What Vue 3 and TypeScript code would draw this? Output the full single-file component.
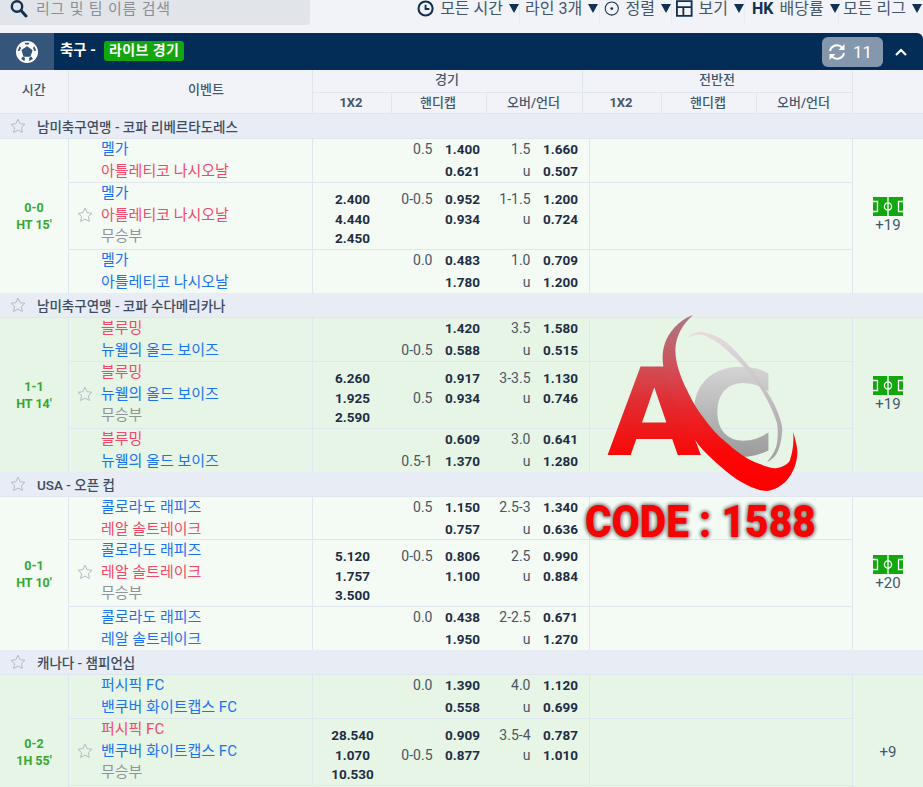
<script setup lang="ts">
interface Line { t: string; c: 'h' | 'a' | 'd' }
interface Row {
  names: Line[]
  x12?: string[]
  hv: [string, string]
  ho: [string, string]
  ov: [string, string]
  oo: [string, string]
}
interface Match { score: string; time: string; more: string; icon: boolean; alt: boolean; tight?: boolean; tail?: boolean; league: string; rows: Row[] }

const L = (t: string, c: 'h' | 'a' | 'd'): Line => ({ t, c })
const D = L('무승부', 'd')

function group(home: string, away: string, spec: any[][]): Row[] {
  return spec.map((s) => ({
    names: s[0] === 'x' ? [L(home, s[1]), L(away, s[2]), D] : [L(home, s[1]), L(away, s[2])],
    x12: s[0] === 'x' ? s[3] : undefined,
    hv: s[4], ho: s[5], ov: s[6], oo: s[7],
  }))
}

const matches: Match[] = [
  {
    score: '0-0', time: "HT 15'", more: '+19', icon: true, alt: false,
    league: '남미축구연맹 - 코파 리베르타도레스',
    rows: group('멜가', '아틀레티코 나시오날', [
      ['n', 'h', 'a', null, ['0.5', ''], ['1.400', '0.621'], ['1.5', 'u'], ['1.660', '0.507']],
      ['x', 'h', 'a', ['2.400', '4.440', '2.450'], ['0-0.5', ''], ['0.952', '0.934'], ['1-1.5', 'u'], ['1.200', '0.724']],
      ['n', 'h', 'h', null, ['0.0', ''], ['0.483', '1.780'], ['1.0', 'u'], ['0.709', '1.200']],
    ]),
  },
  {
    score: '1-1', time: "HT 14'", more: '+19', icon: true, alt: true,
    league: '남미축구연맹 - 코파 수다메리카나',
    rows: group('블루밍', '뉴웰의 올드 보이즈', [
      ['n', 'a', 'h', null, ['', '0-0.5'], ['1.420', '0.588'], ['3.5', 'u'], ['1.580', '0.515']],
      ['x', 'a', 'h', ['6.260', '1.925', '2.590'], ['', '0.5'], ['0.917', '0.934'], ['3-3.5', 'u'], ['1.130', '0.746']],
      ['n', 'a', 'h', null, ['', '0.5-1'], ['0.609', '1.370'], ['3.0', 'u'], ['0.641', '1.280']],
    ]),
  },
  {
    score: '0-1', time: "HT 10'", more: '+20', icon: true, alt: false, tight: true,
    league: 'USA - 오픈 컵',
    rows: group('콜로라도 래피즈', '레알 솔트레이크', [
      ['n', 'h', 'a', null, ['0.5', ''], ['1.150', '0.757'], ['2.5-3', 'u'], ['1.340', '0.636']],
      ['x', 'h', 'a', ['5.120', '1.757', '3.500'], ['0-0.5', ''], ['0.806', '1.100'], ['2.5', 'u'], ['0.990', '0.884']],
      ['n', 'h', 'h', null, ['0.0', ''], ['0.438', '1.950'], ['2-2.5', 'u'], ['0.671', '1.270']],
    ]),
  },
  {
    score: '0-2', time: "1H 55'", more: '+9', icon: false, alt: true, tail: true,
    league: '캐나다 - 챔피언십',
    rows: group('퍼시픽 FC', '밴쿠버 화이트캡스 FC', [
      ['n', 'h', 'h', null, ['0.0', ''], ['1.390', '0.558'], ['4.0', 'u'], ['1.120', '0.699']],
      ['x', 'a', 'h', ['28.540', '1.070', '10.530'], ['', '0-0.5'], ['0.909', '0.877'], ['3.5-4', 'u'], ['0.787', '1.010']],
    ]),
  },
]
</script>

<template>
  <div class="page">
    <div class="toolbar">
      <div class="search">
        <svg class="search-ico" width="18" height="18" viewBox="0 0 18 18"><circle cx="7" cy="6.500" r="5.200" fill="none" stroke="#12304f" stroke-width="2.400"/><path d="M11 10.500l5 5.400" stroke="#12304f" stroke-width="3" stroke-linecap="round"/></svg>
        <span>리그 및 팀 이름 검색</span>
      </div>
      <div class="tools">
        <div class="tool w1">
          <svg width="18" height="18" viewBox="0 0 18 18"><circle cx="9" cy="8.500" r="7.400" fill="none" stroke="#12304f" stroke-width="2.200"/><path d="M9 4.500v4.500h4" fill="none" stroke="#12304f" stroke-width="2"/></svg>
          <span>모든 시간</span><i class="tri"></i>
        </div>
        <div class="tool w2"><span>라인 3개</span><i class="tri"></i></div>
        <div class="tool w3">
          <svg width="18" height="18" viewBox="0 0 18 18"><circle cx="9" cy="8.500" r="7.600" fill="none" stroke="#12304f" stroke-width="1.200"/><circle cx="9" cy="8.500" r="1.600" fill="#12304f"/></svg>
          <span>정렬</span><i class="tri"></i>
        </div>
        <div class="tool w4">
          <svg width="18" height="18" viewBox="0 0 18 18"><path d="M1 0.500h16v16H1zM1 7h16M8 7v9.500" fill="none" stroke="#12304f" stroke-width="2"/></svg>
          <span>보기</span><i class="tri"></i>
        </div>
        <div class="tool w5"><b>HK</b><span>배당률</span><i class="tri"></i></div>
        <div class="tool w6"><span>모든 리그</span><i class="tri"></i></div>
      </div>
    </div>

    <div class="panel-head">
      <div class="ball-box">
        <svg width="24" height="24" viewBox="0 0 24 24">
          <circle cx="12" cy="12" r="11" fill="#fff"/>
          <path d="M12 7l4.700 3.400-1.800 5.600H9.100l-1.800-5.600z" fill="#35557a" stroke="#35557a" stroke-width="1.500" stroke-linejoin="round"/>
          <path d="M9.500 2.800l5 0-1 1.800h-3zM19.300 6.200l2 4.500-1.800.2-1.600-3zM4.700 6.200l-2 4.500 1.800.2 1.600-3zM6 19l1.800-2.400 2.200 1.400-.4 3zM18 19l-1.800-2.400L14 18l.4 3z" fill="#35557a"/>
        </svg>
      </div>
      <span class="sport">축구 -</span>
      <span class="live">라이브 경기</span>
      <div class="refresh">
        <svg width="18" height="18" viewBox="0 0 18 18" fill="none" stroke="#fff" stroke-width="2">
          <path d="M2 8A7 7 0 0 1 14.300 4.800M16 10A7 7 0 0 1 3.700 13.200"/>
          <path d="M16.500 1v6h-6M1.500 17v-6h6" fill="#fff" stroke="none"/>
        </svg>
        <span>11</span>
      </div>
      <svg class="chev" width="14" height="10" viewBox="0 0 14 10"><path d="M2 8l5-5 5 5" fill="none" stroke="#fff" stroke-width="2.200"/></svg>
    </div>

    <div class="thead">
      <div class="th-time">시간</div>
      <div class="th-event">이벤트</div>
      <div class="th-span">
        <div class="th-top">경기</div>
        <div class="th-sub"><div class="c-x">1X2</div><div class="c-h">핸디캡</div><div class="c-o">오버/언더</div></div>
      </div>
      <div class="th-span">
        <div class="th-top">전반전</div>
        <div class="th-sub"><div class="c-x">1X2</div><div class="c-h">핸디캡</div><div class="c-o">오버/언더</div></div>
      </div>
      <div class="th-last"></div>
    </div>

    <template v-for="m in matches" :key="m.league">
      <div class="league">
        <svg class="star" width="16" height="16" viewBox="0 0 16 16"><path d="M8 1.200l2.100 4.500 4.900.6-3.600 3.300 1 4.900L8 12.100l-4.400 2.400 1-4.900L1 6.300l4.900-.6z" fill="none" stroke="#b4bbc6" stroke-width="1"/></svg>
        <span>{{ m.league }}</span>
      </div>
      <div class="match" :class="{ alt: m.alt, tight: m.tight }">
        <div class="time"><div>{{ m.score }}</div><div>{{ m.time }}</div></div>
        <div class="rows">
          <div v-for="(r, i) in m.rows" :key="i" class="row" :class="[r.x12 ? 'tall' : i === 0 ? 'first' : 'last']">
            <div class="event">
              <svg v-if="r.x12" class="star row-star" width="16" height="16" viewBox="0 0 16 16"><path d="M8 1.200l2.100 4.500 4.900.6-3.600 3.300 1 4.900L8 12.100l-4.400 2.400 1-4.900L1 6.300l4.900-.6z" fill="none" stroke="#b4bbc6" stroke-width="1"/></svg>
              <div class="names">
                <div v-for="n in r.names" :key="n.t" :class="n.c">{{ n.t }}</div>
              </div>
            </div>
            <div class="odds c-x"><div v-for="x in r.x12 || []" :key="x">{{ x }}</div></div>
            <div class="odds c-h pair">
              <div><span class="val">{{ r.hv[0] }}</span><span class="od">{{ r.ho[0] }}</span></div>
              <div><span class="val">{{ r.hv[1] }}</span><span class="od">{{ r.ho[1] }}</span></div>
            </div>
            <div class="odds c-o pair">
              <div><span class="val">{{ r.ov[0] }}</span><span class="od">{{ r.oo[0] }}</span></div>
              <div><span class="val">{{ r.ov[1] }}</span><span class="od">{{ r.oo[1] }}</span></div>
            </div>
            <div class="half"></div>
          </div>
          <div v-if="m.tail" class="tail"></div>
        </div>
        <div class="more">
          <svg v-if="m.icon" width="30" height="19" viewBox="0 0 30 19">
            <rect width="30" height="19" fill="#12a70f"/>
            <g fill="none" stroke="#fff" stroke-width="1.300"><path d="M15 0v19"/><circle cx="15" cy="9.500" r="3.600"/><path d="M0 4.500h4.500v10H0M30 4.500h-4.500v10H30"/></g>
          </svg>
          <span>{{ m.more }}</span>
        </div>
      </div>
    </template>

    <div class="mark">
      <svg class="logo" width="200" height="190" viewBox="0 0 200 190">
        <defs>
          <linearGradient id="ga" gradientUnits="userSpaceOnUse" x1="0" y1="50" x2="0" y2="142"><stop offset="0" stop-color="#cf5058"/><stop offset="0.45" stop-color="#e22a2e"/><stop offset="1" stop-color="#fb0606"/></linearGradient>
          <linearGradient id="gs" gradientUnits="userSpaceOnUse" x1="0" y1="0" x2="0" y2="176"><stop offset="0" stop-color="#ab7a85"/><stop offset="0.3" stop-color="#cf5058"/><stop offset="0.55" stop-color="#e8262a"/><stop offset="0.8" stop-color="#fb0606"/><stop offset="1" stop-color="#ff0000"/></linearGradient>
          <linearGradient id="gc" gradientUnits="userSpaceOnUse" x1="0" y1="50" x2="0" y2="145"><stop offset="0" stop-color="#d6d6d6"/><stop offset="1" stop-color="#9a9a9a"/></linearGradient>
          <linearGradient id="gt" gradientUnits="userSpaceOnUse" x1="0" y1="18" x2="0" y2="148"><stop offset="0" stop-color="#e6dcdf"/><stop offset="1" stop-color="#a0a0a0"/></linearGradient>
        </defs>
        <text x="88" y="141" font-family="'DejaVu Sans', sans-serif" font-weight="700" font-size="120" fill="url(#gc)">C</text>
        <path d="M87 24C92 19 98 17 103 18C114 20 122 25 127 29C140 40 148 52 157 63C165 74 173 86 178 99C181 107 183 113 182 119C181 130 178 140 173 144C171 146 169 147 167 148C172 142 176 136 177 129C178 122 178 115 177 109C172 94 165 81 157 69C148 57 140 48 130 39C122 31 112 24 103 21C97 20 92 21 87 24Z" fill="url(#gt)"/>
        <text x="7" y="141" font-family="'DejaVu Sans', sans-serif" font-weight="700" font-size="122" fill="url(#ga)">A</text>
        <path d="M93 1C83 10 77 20 75.500 33C74.500 46 80 62 87 76C92 87 97 95 103 103C110 113 118 122 127 129C136 137 146 145 157 149C165 152 172 155 177 154C184 153 189 149 190 146C193 137 194 128 193 118C197 130 198 137 197 143C196 152 192 160 187 166C182 172 174 176 167 177C160 177 153 174 147 171C139 167 133 163 127 158C118 151 110 143 103 136C90 122 70 85 64 56C62 46 62 38 65 29C68 20 78 6 93 1Z" fill="url(#gs)"/>
      </svg>
      <div class="code">CODE : 1588</div>
    </div>
  </div>
</template>

<style scoped>
.page { position: relative; width: 923px; height: 787px; overflow: hidden; background: #f1f3f8; font-family: Roboto, "Noto Sans CJK KR", sans-serif; color: #2b3b50; }
.toolbar { display: flex; height: 33px; }
.search { width: 310px; height: 25px; background: #e1e4e8; border-radius: 0 0 3px 0; display: flex; align-items: flex-start; padding-left: 10px; box-sizing: border-box; color: #8a8f96; font-size: 15px; line-height: 18px; letter-spacing: .8px; }
.search-ico { margin-right: 8px; flex: none; }
.tools { margin-left: auto; display: flex; height: 24px; font-size: 16px; color: #44566c; line-height: 18px; padding-right: 3px; }
.tool { display: flex; align-items: flex-start; border-right: 1px solid #e7eaf0; box-sizing: border-box; gap: 6px; white-space: nowrap; }
.tool b { color: #12304f; font-size: 16px; margin-left: 1px; }
.w1 { width: 103px; }
.w2 { width: 80px; padding-left: 5px; }
.w3 { width: 72px; padding-left: 4px; }
.w4 { width: 73px; padding-left: 4px; }
.w5 { width: 94px; padding-left: 6px; }
.w6 { width: 81px; padding-left: 4px; border: 0; }
.tri { width: 0; height: 0; border-left: 5px solid transparent; border-right: 5px solid transparent; border-top: 9px solid #12304f; margin-top: 4px; }
.panel-head { height: 37px; background: #032d56; border-radius: 0 6px 0 0; display: flex; align-items: center; color: #fff; }
.ball-box { width: 54px; height: 37px; background: #35557a; display: flex; align-items: center; justify-content: center; }
.sport { margin-left: 6px; font-size: 14.5px; font-weight: 700; width: 44px; line-height: 18px; margin-top: -2px; }
.live { background: #12a70f; border-radius: 3px; height: 20px; line-height: 19px; padding: 0 5px; font-size: 14px; font-weight: 700; letter-spacing: .4px; margin-top: -1px; }
.refresh { margin-left: auto; width: 61px; height: 30px; background: #8597ad; border-radius: 6px; display: flex; align-items: center; padding-left: 6px; box-sizing: border-box; gap: 7px; font-size: 17px; }
.chev { margin: 0 15px 0 11px; }
.thead { display: flex; height: 44px; font-size: 13px; color: #44566c; font-weight: 500; border-bottom: 1px solid #dfe6f0; box-sizing: border-box; text-align: center; }
.th-time { border-right: 1px solid #dfe6f0; line-height: 40px; width: 67.5px; }
.th-event { width: 244px; border-right: 1px solid #dfe6f0; line-height: 40px; padding-left: 32px; box-sizing: border-box; }
.th-span { width: 270px; border-right: 1px solid #dfe6f0; box-sizing: border-box; }
.th-top { height: 23px; line-height: 20px; border-bottom: 1px solid #dfe6f0; box-sizing: border-box; }
.th-sub { display: flex; height: 20px; line-height: 20px; }
.th-sub > div { border-right: 1px solid #dfe6f0; box-sizing: border-box; padding-right: 1px; }
.th-sub > div:last-child { border-right: 0; }
.th-sub .c-x { font-weight: 700; }
.c-x { width: 79px; }
.c-h { width: 95px; }
.c-o { width: 95px; }
.league { height: 25px; background: #e8ecf4; border-bottom: 1px solid #dfe6f0; box-sizing: border-box; display: flex; align-items: center; font-size: 13.5px; font-weight: 500; color: #3d4c60; }
.league .star { margin: 0 11px 0 10px; }
.match { display: flex; background: #f4fbf4; }
.match.alt { background: #e6f5e6; }
.time { width: 69px; border-right: 1px solid #dfe6f0; box-sizing: border-box; display: flex; flex-direction: column; justify-content: center; align-items: center; font-size: 12.5px; font-weight: 700; color: #35a82e; line-height: 17px; }
.rows { width: 783px; }
.row { display: flex; box-sizing: border-box; border-bottom: 1px solid #dfe6f0; }
.row:last-child { border-bottom: 0; }
.row.first { height: 44px; }
.tight .row.first { height: 43px; }
.row.tall { height: 67px; }
.row.last { height: 43px; }
.tail { height: 43px; }
.event { width: 244px; padding-left: 8px; box-sizing: border-box; border-right: 1px solid #dfe6f0; display: flex; position: relative; }
.row-star { position: absolute; left: 8px; top: 24px; }
.names { margin-left: 24px; font-size: 15px; line-height: 21.5px; }
.h { color: #1a74f0; }
.a { color: #f4486a; }
.d { color: #8f949b; }
.odds { font-size: 13.5px; font-weight: 700; color: #1e2d44; line-height: 21.5px; text-align: center; box-sizing: border-box; }
.tall .odds { line-height: 19.5px; padding-top: 7px; }
.odds.c-x { width: 79px; }
.odds.c-h { width: 95px; }
.odds.c-o { width: 102px; }
.pair > div { display: flex; justify-content: flex-end; }
.val { font-weight: 400; font-size: 14px; flex: none; text-align: right; color: #4a5563; }
.c-h .val { width: 40.5px; margin-right: auto; }
.c-o .val { width: 43.5px; margin-right: auto; }
.od { width: 47px; padding-right: 7px; text-align: right; box-sizing: border-box; }
.c-o .od { width: 52px; padding-right: 11px; }
.half { width: 263px; border-left: 1px solid #dfe6f0; box-sizing: border-box; }
.more { width: 71px; border-left: 1px solid #dfe6f0; box-sizing: border-box; display: flex; flex-direction: column; align-items: center; justify-content: center; font-size: 15px; color: #44566c; line-height: 19px; }
.mark { position: absolute; left: 0; top: 0; width: 100%; height: 100%; pointer-events: none; }
.logo { position: absolute; left: 600px; top: 314px; }
.code { position: absolute; left: 585px; top: 497px; width: 280px; font-family: Roboto, sans-serif; font-weight: 900; font-size: 45px; line-height: 50px; color: #f60404; white-space: nowrap; text-shadow: 0 0 5px #8c8c8c, 0 0 5px #8c8c8c, 0 0 4px #8c8c8c; transform: scaleX(.905); transform-origin: left center; }
</style>

<style>
html, body { margin: 0; background: #f1f3f8; overflow: hidden; }
</style>
